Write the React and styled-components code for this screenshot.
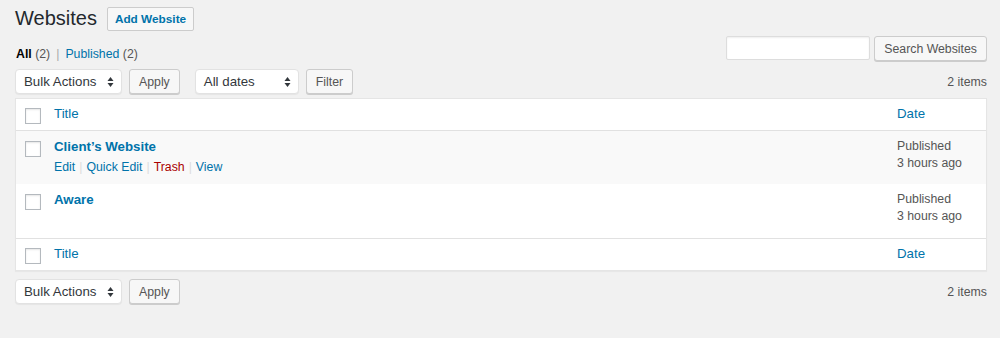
import React from "react";
import styled, { createGlobalStyle } from "styled-components";

const GlobalStyle = createGlobalStyle`
  html, body {
    margin: 0;
    padding: 0;
    background: #f1f1f1;
    font-family: "Liberation Sans", Arial, sans-serif;
    color: #444;
  }
  * { box-sizing: border-box; }
`;

const Page = styled.div`
  padding: 0 13px 0 15px;
  height: 338px;
`;

const HeaderRow = styled.div`
  display: flex;
  align-items: center;
  gap: 10px;
  height: 38px;
  padding-bottom: 1px;
`;

const Heading = styled.h1`
  margin: 0;
  font-size: 20px;
  font-weight: 400;
  color: #23282d;
  line-height: 29px;
`;

const AddButton = styled.a`
  display: inline-flex;
  align-items: center;
  height: 24px;
  padding: 0 7px;
  border: 1px solid #ccc;
  border-radius: 2px;
  background: #f7f7f7;
  color: #0073aa;
  font-size: 11.8px;
  font-weight: 700;
  text-decoration: none;
`;

const FilterRow = styled.div`
  display: flex;
  justify-content: space-between;
  align-items: flex-start;
  margin-top: -2px;
`;

const Subsub = styled.ul`
  display: flex;
  margin: 9px 0 0 1px;
  padding: 0;
  list-style: none;
  font-size: 12.3px;
  line-height: 18px;
  color: #555;
`;

const SubItem = styled.li`
  white-space: pre;
`;

const SubLink = styled.a`
  color: ${({ $current }) => ($current ? "#000" : "#0073aa")};
  font-weight: ${({ $current }) => ($current ? 700 : 400)};
  text-decoration: none;
`;

const Sep = styled.span`
  color: ${({ $light }) => ($light ? "#ddd" : "#aaa")};
  padding: 0 ${({ $light }) => ($light ? 4 : 6)}px;
`;

const SearchBox = styled.div`
  display: flex;
  gap: 4px;
`;

const SearchInput = styled.input`
  width: 144px;
  height: 24px;
  border: 1px solid #ddd;
  border-radius: 2px;
  background: #fff;
  box-shadow: inset 0 1px 2px rgba(0, 0, 0, 0.07);
  outline: none;
`;

const Button = styled.button`
  height: 25px;
  padding: 0 ${({ $pad }) => $pad || 10}px;
  border: 1px solid #ccc;
  border-radius: 3px;
  background: #f7f7f7;
  box-shadow: 0 1px 0 #ccc;
  color: #555;
  font-family: inherit;
  font-size: 12.3px;
  cursor: pointer;
`;

const TableNav = styled.div`
  display: flex;
  align-items: center;
  height: 25px;
  margin-top: ${({ $top }) => $top}px;
`;

const Group = styled.div`
  display: flex;
  gap: 7px;
  margin-right: ${({ $gap }) => $gap || 0}px;
`;

const Select = styled.div`
  display: flex;
  align-items: center;
  justify-content: space-between;
  width: ${({ $w }) => $w}px;
  height: 25px;
  padding: 0 7px 0 8px;
  background: #fff;
  border: 1px solid #e2e2e2;
  border-radius: 4px;
  box-shadow: 0 1px 1px rgba(0, 0, 0, 0.05);
  color: #32373c;
  font-size: 13.3px;
`;

const Count = styled.span`
  margin-left: auto;
  font-size: 12.3px;
  color: #555;
`;

const Table = styled.div`
  margin-top: 4px;
  background: #fff;
  border: 1px solid #e5e5e5;
  box-shadow: 0 1px 1px rgba(0, 0, 0, 0.04);
`;

const Row = styled.div`
  display: grid;
  grid-template-columns: 38px 1fr 89px;
  height: ${({ $h }) => $h}px;
  background: ${({ $alt }) => ($alt ? "#f9f9f9" : "#fff")};
  border-bottom: ${({ $line }) => ($line ? "1px solid #e1e1e1" : "none")};
  border-top: ${({ $topLine }) => ($topLine ? "1px solid #e1e1e1" : "none")};
`;

const CheckCell = styled.div`
  padding: ${({ $pt }) => $pt}px 0 0 9px;
`;

const Check = styled.span`
  display: block;
  width: 16px;
  height: 16px;
  background: #fff;
  border: 1px solid #b4b9be;
  box-shadow: inset 0 1px 2px rgba(0, 0, 0, 0.1);
`;

const Cell = styled.div`
  padding-top: ${({ $pt }) => $pt}px;
`;

const HeadLink = styled.a`
  display: block;
  color: #0073aa;
  font-size: 13.3px;
  line-height: 18px;
  text-decoration: none;
`;

const RowTitle = styled.a`
  display: block;
  color: #0073aa;
  font-size: 13.3px;
  font-weight: 700;
  line-height: 19px;
  text-decoration: none;
`;

const Actions = styled.div`
  margin-top: 2px;
  font-size: 12.3px;
  line-height: 18px;
  color: #ddd;
`;

const ActionLink = styled.a`
  color: ${({ $danger }) => ($danger ? "#a00" : "#0073aa")};
  text-decoration: none;
`;

const DateText = styled.div`
  font-size: 12.3px;
  line-height: 17px;
  color: #555;
`;

const Arrows = () => (
  <svg width="7" height="12" viewBox="0 0 7 12">
    <path d="M3.5 1 L6.5 5 H0.5 Z M3.5 11 L0.5 7 H6.5 Z" fill="#32373c" />
  </svg>
);

const Nav = ({ top, dates }) => (
  <TableNav $top={top}>
    <Group $gap={15}>
      <Select $w={107}>
        Bulk Actions <Arrows />
      </Select>
      <Button $pad={9}>Apply</Button>
    </Group>
    {dates && (
      <Group>
        <Select $w={104}>
          All dates <Arrows />
        </Select>
        <Button $pad={9}>Filter</Button>
      </Group>
    )}
    <Count>2 items</Count>
  </TableNav>
);

const posts = [
  { title: "Client’s Website", alt: true, actions: true },
  { title: "Aware", alt: false, actions: false },
];

export default function App() {
  return (
    <Page>
      <GlobalStyle />
      <HeaderRow>
        <Heading>Websites</Heading>
        <AddButton>Add Website</AddButton>
      </HeaderRow>
      <FilterRow>
        <Subsub>
          <SubItem>
            <SubLink $current>All</SubLink> (2)
            <Sep>|</Sep>
          </SubItem>
          <SubItem>
            <SubLink>Published</SubLink> (2)
          </SubItem>
        </Subsub>
        <SearchBox>
          <SearchInput />
          <Button $pad={9}>Search Websites</Button>
        </SearchBox>
      </FilterRow>
      <Nav top={6} dates />
      <Table>
        <Row $h={32} $line>
          <CheckCell $pt={9}>
            <Check />
          </CheckCell>
          <Cell $pt={6}>
            <HeadLink>Title</HeadLink>
          </Cell>
          <Cell $pt={6}>
            <HeadLink>Date</HeadLink>
          </Cell>
        </Row>
        {posts.map((p) => (
          <Row key={p.title} $h={p.alt ? 53 : 54} $alt={p.alt}>
            <CheckCell $pt={10}>
              <Check />
            </CheckCell>
            <Cell $pt={6}>
              <RowTitle>{p.title}</RowTitle>
              {p.actions && (
                <Actions>
                  <ActionLink>Edit</ActionLink>
                  <Sep $light>|</Sep>
                  <ActionLink>Quick Edit</ActionLink>
                  <Sep $light>|</Sep>
                  <ActionLink $danger>Trash</ActionLink>
                  <Sep $light>|</Sep>
                  <ActionLink>View</ActionLink>
                </Actions>
              )}
            </Cell>
            <Cell $pt={7}>
              <DateText>Published</DateText>
              <DateText>3 hours ago</DateText>
            </Cell>
          </Row>
        ))}
        <Row $h={32} $topLine>
          <CheckCell $pt={9}>
            <Check />
          </CheckCell>
          <Cell $pt={6}>
            <HeadLink>Title</HeadLink>
          </Cell>
          <Cell $pt={6}>
            <HeadLink>Date</HeadLink>
          </Cell>
        </Row>
      </Table>
      <Nav top={8} />
    </Page>
  );
}
